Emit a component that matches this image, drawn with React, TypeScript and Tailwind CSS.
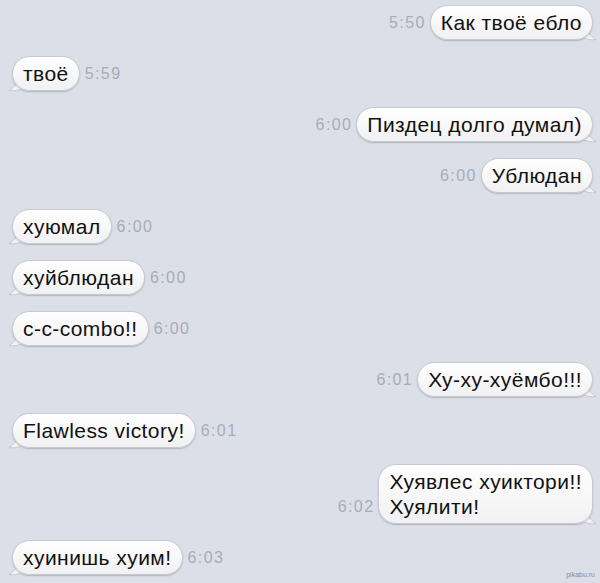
import React from "react";

type Msg = { side: "l" | "r"; lines: string[]; time: string };

const msgs: Msg[] = [
  { side: "r", lines: ["Как твоё ебло"], time: "5:50" },
  { side: "l", lines: ["твоё"], time: "5:59" },
  { side: "r", lines: ["Пиздец долго думал)"], time: "6:00" },
  { side: "r", lines: ["Ублюдан"], time: "6:00" },
  { side: "l", lines: ["хуюмал"], time: "6:00" },
  { side: "l", lines: ["хуйблюдан"], time: "6:00" },
  { side: "l", lines: ["с-с-combo!!"], time: "6:00" },
  { side: "r", lines: ["Ху-ху-хуёмбо!!!"], time: "6:01" },
  { side: "l", lines: ["Flawless victory!"], time: "6:01" },
  { side: "r", lines: ["Хуявлес хуиктори!!", "Хуялити!"], time: "6:02" },
  { side: "l", lines: ["хуинишь хуим!"], time: "6:03" },
];

function Tail({ side }: { side: "l" | "r" }) {
  if (side === "r") {
    return (
      <svg
        className="absolute -right-[6px] bottom-[-1px]"
        width="16"
        height="16"
        viewBox="0 0 16 16"
      >
        <path
          d="M2 0 C4 6 7 11 13 14.5 C8 15.5 3 14.5 0 12 Z"
          fill="#f2f2f4"
          stroke="#bdc0ca"
          strokeWidth="0.8"
        />
        <rect x="-2" y="0" width="6" height="13" fill="#f2f2f4" />
      </svg>
    );
  }
  return (
    <svg
      className="absolute -left-[6px] bottom-[-1px]"
      width="16"
      height="16"
      viewBox="0 0 16 16"
    >
      <path
        d="M14 0 C12 6 9 11 3 14.5 C8 15.5 13 14.5 16 12 Z"
        fill="#f2f2f4"
        stroke="#bdc0ca"
        strokeWidth="0.8"
      />
      <rect x="12" y="0" width="6" height="13" fill="#f2f2f4" />
    </svg>
  );
}

function Bubble({ m }: { m: Msg }) {
  return (
    <div className="relative">
      <Tail side={m.side} />
      <div className="relative rounded-[18px] border border-[#c6c9d2] bg-gradient-to-b from-white to-[#f1f1f3] px-[10px] py-[4px] text-[21px] leading-[25px] tracking-[0.45px] text-[#111] shadow-[0_1px_1.5px_rgba(0,0,0,0.2)]">
        {m.lines.map((l, i) => (
          <div key={i} className="whitespace-nowrap">
            {l}
          </div>
        ))}
      </div>
    </div>
  );
}

function Time({ t, side }: { t: string; side: "l" | "r" }) {
  return (
    <span
      className={
        side === "r"
          ? "mb-[8px] mr-[-1px] text-[16px] leading-[18px] tracking-[1.4px] text-[#a8acb8]"
          : "mb-[8px] text-[16px] leading-[18px] tracking-[1.4px] text-[#a8acb8]"
      }
    >
      {t}
    </span>
  );
}

export default function App() {
  return (
    <div
      className="relative h-[583px] w-[600px] overflow-hidden bg-[#dcdfe7]"
      style={{ fontFamily: '"Liberation Sans", Arial, sans-serif' }}
    >
      <div className="flex flex-col gap-[16px] pt-[5px]">
        {msgs.map((m, i) => (
          <div
            key={i}
            className={
              m.side === "r"
                ? "flex items-end justify-end gap-[5px] pr-[7px]"
                : "flex items-end justify-start gap-[5px] pl-[12px]"
            }
          >
            {m.side === "r" && <Time t={m.time} side="r" />}
            <Bubble m={m} />
            {m.side === "l" && <Time t={m.time} side="l" />}
          </div>
        ))}
      </div>
      <div className="absolute bottom-[4px] right-[5px] text-[7px] leading-[8px] text-[#8a8d96]">
        pikabu.ru
      </div>
    </div>
  );
}
